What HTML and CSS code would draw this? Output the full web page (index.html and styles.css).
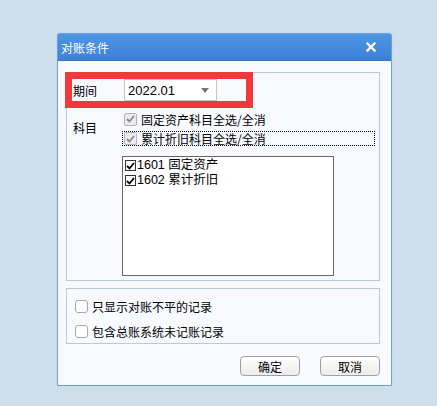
FILE: index.html
```html
<!DOCTYPE html>
<html lang="zh-CN">
<head>
    <meta charset="UTF-8">
    <title>对账条件</title>
    <link rel="stylesheet" href="styles.css">
</head>
<body>
    <div class="dialog">
        <div class="titlebar">
            <span class="title">对账条件</span>
            <svg class="close" width="10" height="10" viewBox="0 0 10 10">
                <path d="M1.5 1.5 L8.5 8.5 M8.5 1.5 L1.5 8.5" stroke="#fff" stroke-width="2.4" stroke-linecap="square"/>
            </svg>
        </div>
        <div class="content">
            <div class="group main-group">
                <div class="row period-row">
                    <span class="label">期间</span>
                    <div class="combo">
                        <span class="combo-value">2022.01</span>
                        <span class="combo-arrow"></span>
                    </div>
                </div>
                <div class="row subject-row">
                    <span class="label subject-label">科目</span>
                    <div class="subject-col">
                        <div class="option">
                            <span class="box gray"><svg width="9" height="8" viewBox="0 0 9 8"><path d="M1 4 L3.5 6.5 L8 1" stroke="#8a8a8a" stroke-width="1.8" fill="none"/></svg></span>
                            <span>固定资产科目全选/全消</span>
                        </div>
                        <div class="option focused">
                            <span class="box gray"><svg width="9" height="8" viewBox="0 0 9 8"><path d="M1 4 L3.5 6.5 L8 1" stroke="#8a8a8a" stroke-width="1.8" fill="none"/></svg></span>
                            <span>累计折旧科目全选/全消</span>
                        </div>
                        <div class="listbox">
                            <div class="list-item">
                                <span class="mini-box"><svg width="9" height="8" viewBox="0 0 9 8"><path d="M1 4 L3.5 6.5 L8 1" stroke="#000" stroke-width="1.8" fill="none"/></svg></span>
                                <span>1601 固定资产</span>
                            </div>
                            <div class="list-item">
                                <span class="mini-box"><svg width="9" height="8" viewBox="0 0 9 8"><path d="M1 4 L3.5 6.5 L8 1" stroke="#000" stroke-width="1.8" fill="none"/></svg></span>
                                <span>1602 累计折旧</span>
                            </div>
                        </div>
                    </div>
                </div>
                <div class="highlight"></div>
            </div>
            <div class="group option-group">
                <div class="check-line"><span class="round-box"></span><span>只显示对账不平的记录</span></div>
                <div class="check-line"><span class="round-box"></span><span>包含总账系统未记账记录</span></div>
            </div>
            <div class="buttons">
                <button class="btn">确定</button>
                <button class="btn">取消</button>
            </div>
        </div>
    </div>
</body>
</html>
```

FILE: styles.css
```css
body {
    margin: 0;
    padding: 33px 0 0 57px;
    background-color: #cfdeec;
    font-family: "Noto Sans CJK SC", "Liberation Sans", sans-serif;
    font-size: 12px;
    color: #000;
}

.dialog {
    width: 333px;
    height: 351px;
    border: 1px solid #6f9fd8;
    border-radius: 3px 3px 0 0;
    background: #f8faff;
    box-shadow: 0 0 1px rgba(0,0,0,0.2);
}

.titlebar {
    height: 26px;
    background: linear-gradient(#4d95e5, #3d82d8);
    border-bottom: 1px solid #3574c4;
    color: #fff;
    display: flex;
    align-items: center;
    justify-content: space-between;
    padding: 0 15px 0 3px;
}

.title {
    font-size: 12px;
}

.content {
    padding: 11px 11px 0 8px;
}

.group {
    border: 1px solid #b9c9db;
    position: relative;
}

.main-group {
    height: 207px;
}

.row {
    display: flex;
}

.label {
    width: 51px;
    padding-left: 6px;
}

.period-row {
    margin-top: 6px;
    align-items: center;
}

.combo {
    width: 93px;
    height: 22px;
    border: 1px solid #c6c6c6;
    background: #fff;
    display: flex;
    align-items: center;
    justify-content: space-between;
    padding: 0 7px 0 3px;
    box-sizing: border-box;
}

.combo-value {
    font-family: "Liberation Sans", sans-serif;
    font-size: 13px;
}

.combo-arrow {
    width: 0;
    height: 0;
    border-left: 4px solid transparent;
    border-right: 4px solid transparent;
    border-top: 5px solid #777;
}

.subject-row {
    margin-top: 10px;
}

.subject-label {
    padding-top: 8px;
}

.subject-col {
    display: flex;
    flex-direction: column;
    gap: 4px;
}

.option {
    display: flex;
    align-items: center;
    gap: 4px;
    height: 16px;
    padding-left: 0;
}

.option.focused {
    width: 250px;
    height: 13px;
    border: 1px dotted #000;
    margin-left: -2px;
    padding-left: 1px;
}

.box {
    width: 11px;
    height: 11px;
    border: 1px solid #b5b5b5;
    background: #ececec;
    display: flex;
    align-items: center;
    justify-content: center;
    border-radius: 2px;
}

.listbox {
    margin: 6px 0 0 -2px;
    width: 212px;
    height: 120px;
    border: 1px solid #666;
    background: #fff;
    padding: 1px 0 0 2px;
    box-sizing: border-box;
}

.list-item {
    display: flex;
    align-items: center;
    height: 15px;
    line-height: 15px;
    font-size: 12.5px;
}

.mini-box {
    width: 9px;
    height: 9px;
    border: 1px solid #333;
    display: flex;
    align-items: center;
    justify-content: center;
    margin-right: 1px;
}

.list-item span:last-child {
    font-family: "Liberation Sans", "Noto Sans CJK SC", sans-serif;
}

.highlight {
    position: absolute;
    left: -2px;
    top: -1px;
    width: 174px;
    height: 22px;
    border: 7px solid #f2383a;
}

.option-group {
    margin-top: 7px;
    height: 56px;
    padding: 10px 0 0 8px;
    box-sizing: border-box;
    display: flex;
    flex-direction: column;
    gap: 11px;
}

.check-line {
    display: flex;
    align-items: center;
    gap: 4px;
    height: 14px;
}

.round-box {
    width: 11px;
    height: 11px;
    border: 1px solid #a9a9a9;
    border-radius: 3px;
    background: #fff;
}

.buttons {
    display: flex;
    justify-content: flex-end;
    gap: 20px;
    margin-top: 12px;
}

.btn {
    width: 60px;
    height: 20px;
    border: 1px solid #a0a0a0;
    border-radius: 4px;
    background: linear-gradient(#ffffff, #ececec);
    font-family: "Noto Sans CJK SC", sans-serif;
    font-size: 12px;
    padding: 0;
    color: #000;
}
```
